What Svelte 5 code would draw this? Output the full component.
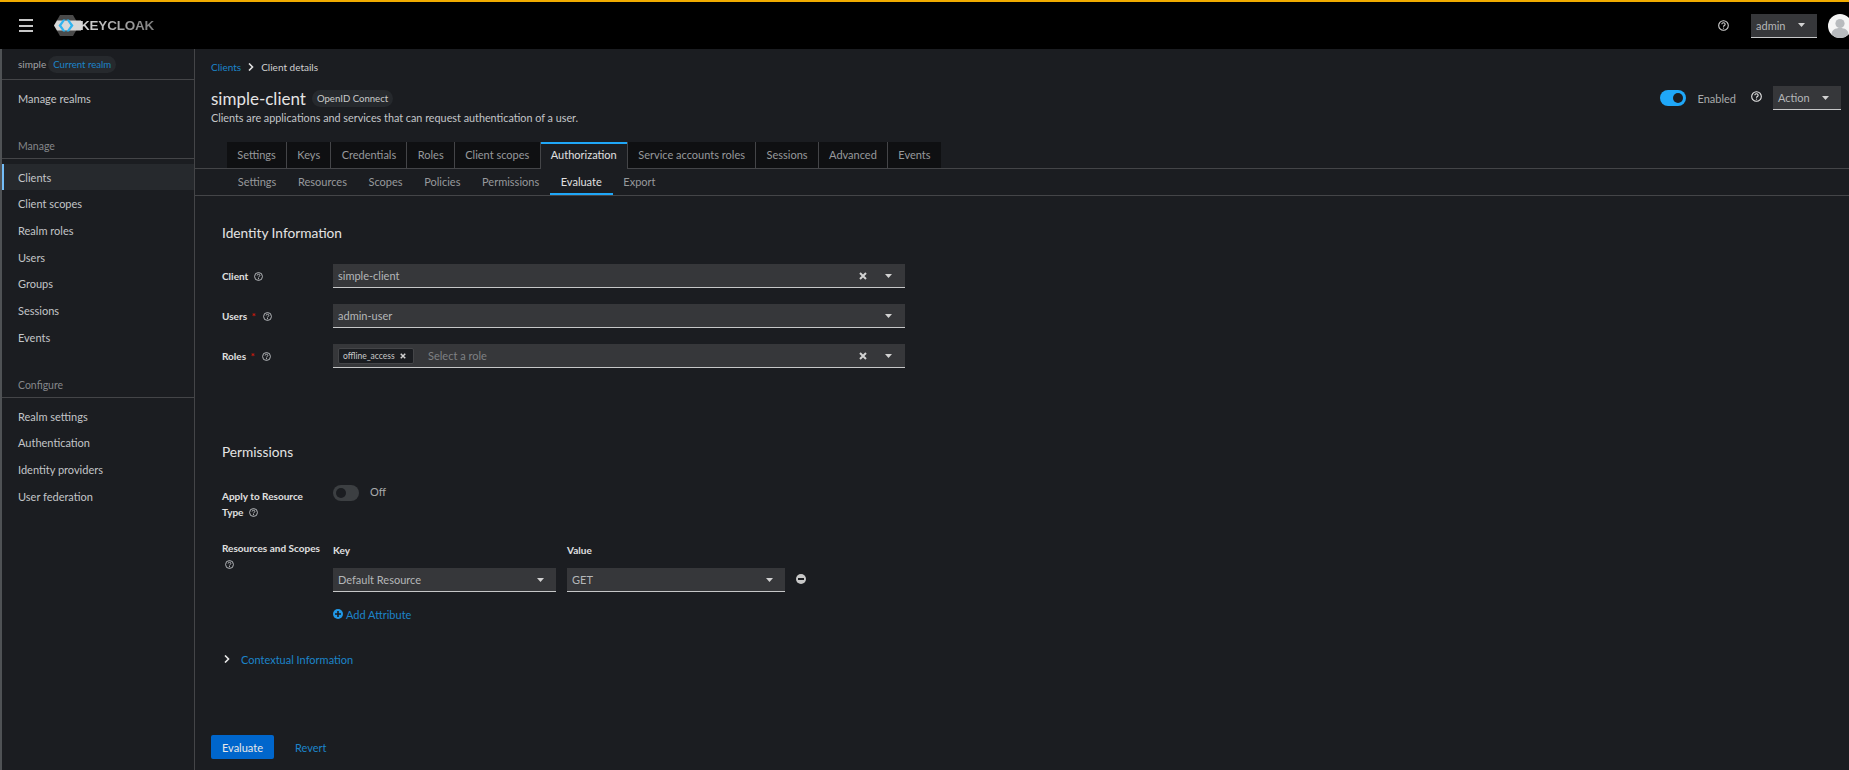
<script>
  const manage = ['Clients', 'Client scopes', 'Realm roles', 'Users', 'Groups', 'Sessions', 'Events'];
  const configure = ['Realm settings', 'Authentication', 'Identity providers', 'User federation'];
  const tabs = ['Settings', 'Keys', 'Credentials', 'Roles', 'Client scopes', 'Authorization', 'Service accounts roles', 'Sessions', 'Advanced', 'Events'];
  const subTabs = ['Settings', 'Resources', 'Scopes', 'Policies', 'Permissions', 'Evaluate', 'Export'];
</script>

{#snippet help(size = 9)}
  <svg class="help" width={size} height={size} viewBox="0 0 16 16">
    <circle cx="8" cy="8" r="7" fill="none" stroke="currentColor" stroke-width="1.6" />
    <path d="M5.6 6.2c0-1.4 1.1-2.2 2.4-2.2s2.4.8 2.4 2.1c0 1.9-2.4 1.9-2.4 3.6" fill="none" stroke="currentColor" stroke-width="1.6" />
    <circle cx="8" cy="11.8" r="1" fill="currentColor" />
  </svg>
{/snippet}

{#snippet caret()}
  <svg class="caret" width="7" height="4" viewBox="0 0 7 4"><path d="M0 0h7L3.5 4z" fill="currentColor" /></svg>
{/snippet}

{#snippet cross()}
  <svg class="cross" width="8" height="8" viewBox="0 0 8 8"><path d="M1 1l6 6M7 1L1 7" stroke="currentColor" stroke-width="2" /></svg>
{/snippet}

<div class="page">
  <header class="masthead">
    <button class="burger" aria-label="Menu"><span></span><span></span><span></span></button>
    <div class="logo">
      <svg width="27" height="21" viewBox="0 0 27 21">
        <path d="M0 10.5L6 0h13l6 10.5L19 21H6z" fill="#4a4a4a" />
        <path d="M0 10.5L3 5.5h24v10H3z" fill="#d8d8d8" />
        <path d="M9 4.5L4.5 10.5 9 16.5h2.6L7.4 10.5l4.2-6z" fill="#2fb4f0" />
        <path d="M15 4.5l4.5 6-4.5 6h-2.6l4.2-6-4.2-6z" fill="#2fb4f0" />
      </svg>
      <span>KEYCLOAK</span>
    </div>
    <div class="mast-right">
      <span class="mast-help">{@render help(11)}</span>
      <div class="select small">admin {@render caret()}</div>
      <svg class="avatar" width="24" height="24" viewBox="0 0 24 24">
        <circle cx="12" cy="12" r="12" fill="#f5f5f5" />
        <circle cx="12" cy="9.5" r="4.6" fill="#b8bbbe" />
        <path d="M3.500 20.500c0-4.500 3.800-6.500 8.500-6.500s8.500 2 8.500 6.500a12 12 0 0 1-17 0z" fill="#b8bbbe" />
      </svg>
    </div>
  </header>

  <div class="layout">
    <nav class="sidebar">
      <div class="realm">simple <span class="pill link">Current realm</span></div>
      <a class="nav-item manage-realms">Manage realms</a>

      <div class="group-title first">Manage</div>
      <div class="nav-list">
        {#each manage as item}
          <a class="nav-item" class:current={item === 'Clients'}>{item}</a>
        {/each}
      </div>

      <div class="group-title second">Configure</div>
      <div class="nav-list">
        {#each configure as item}
          <a class="nav-item">{item}</a>
        {/each}
      </div>
    </nav>

    <main class="content">
      <div class="crumbs">
        <span class="link">Clients</span>
        <svg width="6" height="8" viewBox="0 0 6 8"><path d="M1 0.500L4.500 4 1 7.500" fill="none" stroke="#e0e0e0" stroke-width="1.600" /></svg>
        <span>Client details</span>
      </div>

      <div class="title-row">
        <h1>simple-client</h1>
        <span class="pill">OpenID Connect</span>
        <div class="title-right">
          <span class="toggle on"></span>
          <span class="toggle-label">Enabled</span>
          <span class="title-help">{@render help(11)}</span>
          <div class="select action">Action {@render caret()}</div>
        </div>
      </div>
      <p class="desc">Clients are applications and services that can request authentication of a user.</p>

      <div class="tabs">
        {#each tabs as tab}
          <span class="tab" class:active={tab === 'Authorization'}>{tab}</span>
        {/each}
      </div>
      <div class="subtabs">
        {#each subTabs as tab}
          <span class="subtab" class:active={tab === 'Evaluate'}>{tab}</span>
        {/each}
      </div>

      <section class="form">
        <h2>Identity Information</h2>

        <div class="rows">
          <div class="row">
            <label>Client {@render help()}</label>
            <div class="select wide"><span class="val">simple-client</span>{@render cross()}{@render caret()}</div>
          </div>
          <div class="row">
            <label>Users <i>*</i> {@render help()}</label>
            <div class="select wide"><span class="val">admin-user</span>{@render caret()}</div>
          </div>
          <div class="row">
            <label>Roles <i>*</i> {@render help()}</label>
            <div class="select wide">
              <span class="chip">offline_access {@render cross()}</span>
              <span class="val placeholder">Select a role</span>
              {@render cross()}{@render caret()}
            </div>
          </div>
        </div>

        <h2 class="perm">Permissions</h2>

        <div class="row top apply">
          <label>Apply to Resource Type {@render help()}</label>
          <div class="off"><span class="toggle"></span><span class="toggle-label">Off</span></div>
        </div>

        <div class="row top scopes">
          <label>Resources and Scopes {@render help()}</label>
          <div>
            <div class="kv">
              <div class="key"><b>Key</b><div class="select"><span class="val">Default Resource</span>{@render caret()}</div></div>
              <div class="value"><b>Value</b><div class="select"><span class="val">GET</span>{@render caret()}</div></div>
              <svg class="minus" width="10" height="10" viewBox="0 0 10 10"><circle cx="5" cy="5" r="5" fill="#c8c8c8" /><rect x="2" y="4" width="6" height="2" fill="#1b1d21" /></svg>
            </div>
            <div class="add link">
              <svg width="10" height="10" viewBox="0 0 10 10"><circle cx="5" cy="5" r="5" fill="#2199e8" /><path d="M2 5h6M5 2v6" stroke="#1b1d21" stroke-width="1.600" /></svg>
              Add Attribute
            </div>
          </div>
        </div>

        <div class="contextual">
          <svg width="6" height="8" viewBox="0 0 6 8"><path d="M1 0.500L4.500 4 1 7.500" fill="none" stroke="#e8e8e8" stroke-width="1.600" /></svg>
          <span class="link">Contextual Information</span>
        </div>

        <div class="actions">
          <button class="primary">Evaluate</button>
          <span class="link">Revert</span>
        </div>
      </section>
    </main>
  </div>
</div>

<style>
  :global(body) {
    margin: 0;
    background: #1b1d21;
    overflow: hidden;
  }

  .page {
    width: 1849px;
    height: 770px;
    box-sizing: border-box;
    border-top: 2px solid #f0ab00;
    overflow: hidden;
    font-family: Lato, "Noto Sans", sans-serif;
    font-size: 11px;
    color: #c9c9c9;
  }

  .link { color: #1c84c9; }

  .masthead {
    height: 47px;
    background: #000;
    display: flex;
    align-items: center;
    padding-left: 19px;
  }
  .burger {
    width: 14px;
    height: 13px;
    padding: 0;
    border: 0;
    background: none;
    display: flex;
    flex-direction: column;
    justify-content: space-between;
    margin-right: 21px;
  }
  .burger span { height: 2px; background: #c8c8c8; }
  .logo { display: flex; align-items: center; }
  .logo span {
    font-family: "Liberation Sans", sans-serif;
    font-weight: 700;
    font-size: 13.5px;
    letter-spacing: -0.2px;
    background: linear-gradient(90deg, #d8d8d8, #7d7d7d);
    -webkit-background-clip: text;
    background-clip: text;
    color: transparent;
    margin-left: -1px;
  }
  .mast-right {
    margin-left: auto;
    display: flex;
    align-items: center;
    color: #d2d2d2;
  }
  .mast-help { display: flex; margin-right: 22px; }
  .avatar { margin: 0 -3px 0 11px; }

  .select {
    background: #36373a;
    border-bottom: 1px solid #c6c7c8;
    box-sizing: border-box;
    height: 24px;
    display: flex;
    align-items: center;
    padding: 0 6px 0 5px;
    color: #b4b6b8;
  }
  .select .caret { margin-left: auto; color: #d2d2d2; margin-right: 6.5px; flex: none; }
  .select.small { width: 66px; }
  .select.action { width: 68px; }

  .layout { display: flex; height: 721px; }

  .sidebar {
    width: 192px;
    box-sizing: content-box;
    border-left: 2px solid #4f5255;
    border-right: 1px solid #444548;
    background: #1b1d21;
    flex: none;
  }
  .realm {
    height: 31px;
    box-sizing: border-box;
    border-bottom: 1px solid #444548;
    padding-left: 16px;
    display: flex;
    align-items: center;
    gap: 2px;
    font-size: 10px;
    color: #a0a2a5;
  }
  .pill {
    background: #26292d;
    border-radius: 10px;
    padding: 3px 5px;
    font-size: 9.6px;
  }
  .nav-item {
    display: block;
    height: 26.67px;
    line-height: 26.67px;
    box-sizing: border-box;
    padding: 1px 0 0 16px;
    color: #c3c5c8;
  }
  .manage-realms { margin-top: 5px; }
  .group-title {
    height: 21px;
    line-height: 16px;
    box-sizing: border-box;
    border-bottom: 1px solid #444548;
    padding-left: 16px;
    font-size: 10.5px;
    color: #85878a;
  }
  .group-title.first { margin-top: 26px; }
  .group-title.second { margin-top: 26.5px; }
  .nav-list { padding-top: 5px; }
  .nav-item.current {
    background: #26292d;
    box-shadow: inset 2px 0 0 #73bcf7;
  }

  .content { flex: 1; min-width: 0; }

  .crumbs {
    margin: 10px 0 0 16px;
    height: 16px;
    display: flex;
    align-items: center;
    gap: 7px;
    font-size: 10px;
    color: #d0d0d0;
  }

  .title-row {
    margin: 11px 8px 0 16px;
    height: 24px;
    display: flex;
    align-items: center;
    gap: 6px;
  }
  h1 {
    margin: 0;
    font-size: 17px;
    font-weight: 400;
    color: #e4e4e4;
  }
  .title-right {
    margin-left: auto;
    display: flex;
    align-items: center;
  }
  .title-help { display: flex; margin: -3px 11px 0 15px; color: #e8e8e8; }
  .toggle-label { margin-left: 11px; color: #a8aaac; }
  .toggle {
    display: inline-block;
    position: relative;
    width: 26px;
    height: 16px;
    border-radius: 8px;
    background: #3c3f42;
    flex: none;
  }
  .toggle::after {
    content: '';
    position: absolute;
    top: 3px;
    left: 3px;
    width: 10px;
    height: 10px;
    border-radius: 50%;
    background: #1b1d21;
  }
  .toggle.on { background: #1fa7f8; }
  .toggle.on::after { left: 13px; }

  .desc {
    margin: 0 0 0 16px;
    height: 16px;
    line-height: 16px;
    color: #c3c5c8;
    font-size: 10.8px;
  }

  .tabs {
    margin-top: 16px;
    padding-left: 32px;
    height: 27px;
    box-sizing: border-box;
    display: flex;
    border-bottom: 1px solid #444548;
  }
  .tab {
    height: 26px;
    line-height: 26px;
    padding: 0 10.25px;
    background: #0f1012;
    border-right: 1px solid #444548;
    color: #97999c;
    box-sizing: border-box;
  }
  .tab:last-child { border-right: 0; }
  .tab.active {
    background: #1b1d21;
    color: #e0e0e0;
    box-shadow: inset 0 2px 0 #1fa7f8;
    border-left: 1px solid #444548;
    height: 27px;
    margin-left: -1px;
  }
  .subtabs {
    padding-left: 32px;
    height: 27px;
    box-sizing: border-box;
    display: flex;
    border-bottom: 1px solid #444548;
  }
  .subtab {
    height: 26px;
    line-height: 26px;
    padding: 0 10.8px;
    color: #97999c;
  }
  .subtab.active {
    color: #e0e0e0;
    box-shadow: inset 0 -2px 0 #1fa7f8;
  }

  .form { padding-left: 27px; }
  h2 {
    margin: 27px 0 0;
    height: 20px;
    line-height: 20px;
    font-size: 13.7px;
    font-weight: 400;
    color: #e4e4e4;
  }
  h2.perm { margin-top: 74px; }

  .rows {
    margin-top: 21px;
    display: flex;
    flex-direction: column;
    gap: 16px;
  }
  .row {
    display: grid;
    grid-template-columns: 111px 572px;
    align-items: center;
  }
  .row.top { align-items: start; }
  label {
    max-width: 100px;
    font-size: 10px;
    font-weight: 700;
    color: #e0e0e0;
    line-height: 16px;
  }
  label i { color: #c9190b; font-style: normal; margin: 0 2px; }
  label .help { color: #c3c5c8; margin-left: 3px; vertical-align: -1px; }

  .wide .caret { margin-left: 17.5px; margin-right: 7.5px; }
  .wide .cross { margin-left: auto; color: #d2d2d2; }
  .wide .val { flex: none; }
  .wide .val + .caret { margin-left: auto; }
  .chip {
    display: flex;
    align-items: center;
    gap: 5px;
    height: 16px;
    padding: 0 4px;
    background: #1b1d21;
    border: 1px solid #444548;
    box-sizing: border-box;
    border-radius: 2px;
    font-size: 8.5px;
    color: #c9c9c9;
    margin-right: 14px;
    width: 76px;
  }
  .chip .cross { margin: 0; width: 6px; height: 6px; }
  .placeholder { color: #7f8184; }

  .apply { margin-top: 23px; }
  .apply label { padding-top: 3px; }
  .off { display: flex; align-items: flex-start; }
  .off .toggle-label { line-height: 14px; }

  .scopes { margin-top: 20px; }
  .kv { display: flex; align-items: flex-start; gap: 11px; }
  .kv b {
    display: block;
    height: 16px;
    line-height: 16px;
    margin: 2px 0 10px;
    font-size: 10px;
    font-weight: 700;
    color: #e0e0e0;
  }
  .key { width: 223px; }
  .value { width: 218px; }
  .minus { margin-top: 34px; }
  .add {
    margin-top: 14px;
    height: 16px;
    display: flex;
    align-items: center;
    gap: 3px;
  }

  .contextual {
    margin: 29px 0 0 2px;
    height: 16px;
    display: flex;
    align-items: center;
    gap: 11px;
  }

  .actions {
    margin: 68px 0 0 -11px;
    display: flex;
    align-items: center;
    gap: 21px;
  }
  .primary {
    width: 63px;
    height: 24px;
    border: 0;
    padding: 0;
    border-radius: 2px;
    background: #06c;
    color: #e8e8e8;
    font: inherit;
  }
</style>
